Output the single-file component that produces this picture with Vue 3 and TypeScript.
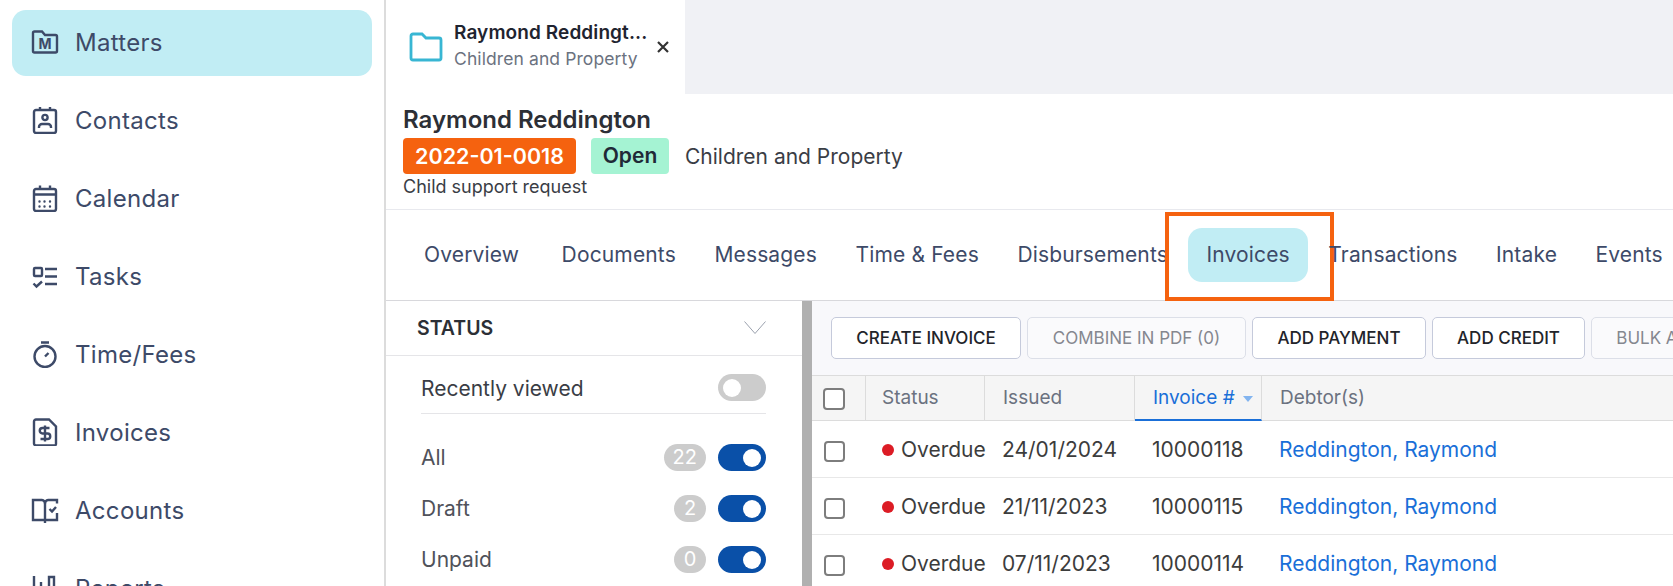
<script setup lang="ts">
const invoices = [
  { issued: '24/01/2024', number: '10000118' },
  { issued: '21/11/2023', number: '10000115' },
  { issued: '07/11/2023', number: '10000114' },
];

const tabs = ['Overview', 'Documents', 'Messages', 'Time & Fees', 'Disbursements', 'Invoices', 'Transactions', 'Intake', 'Events'];

const filters = [
  { label: 'All', count: 22 },
  { label: 'Draft', count: 2 },
  { label: 'Unpaid', count: 0 },
];
</script>

<template>
  <div class="app">
    <aside class="sidebar">
      <a class="nav-item active">
        <svg class="nav-icon" viewBox="0 0 28 28">
          <path d="M2 5a1.500 1.500 0 0 1 1.500-1.500H11L14 7h10.500A1.500 1.500 0 0 1 26 8.500V23a1.500 1.500 0 0 1-1.500 1.500h-21A1.500 1.500 0 0 1 2 23z" />
          <text x="14" y="20.500" class="icon-letter">M</text>
        </svg>
        Matters
      </a>
      <a class="nav-item">
        <svg class="nav-icon" viewBox="0 0 28 28">
          <rect x="3" y="4" width="22" height="23" rx="2" />
          <path d="M9 1v3M19 1v3M8 22v-1a3 3 0 0 1 3-3h6a3 3 0 0 1 3 3v1" />
          <circle cx="14" cy="11.500" r="2.600" />
        </svg>
        Contacts
      </a>
      <a class="nav-item">
        <svg class="nav-icon" viewBox="0 0 28 28">
          <rect x="3" y="5" width="22" height="22" rx="2" />
          <path d="M9 1.500V5M19 1.500V5M3 10.500h22" />
          <path class="dots" d="M8.500 17.500h.01M13.500 17.500h.01M19 17.500h.01M8.500 22.500h.01M13.500 22.500h.01M19 22.500h.01" />
        </svg>
        Calendar
      </a>
      <a class="nav-item">
        <svg class="nav-icon" viewBox="0 0 28 28">
          <rect x="3" y="6" width="8" height="8" rx="1" />
          <path d="M14 7h12M14 14.500h12M14 22h12M2.500 21.500l3 3 5.500-5" />
        </svg>
        Tasks
      </a>
      <a class="nav-item">
        <svg class="nav-icon" viewBox="0 0 28 28">
          <circle cx="14" cy="16.500" r="10.500" />
          <path d="M10 2.500h8M14 16.500l3.500-3.500" />
        </svg>
        Time/Fees
      </a>
      <a class="nav-item">
        <svg class="nav-icon" viewBox="0 0 28 28">
          <path d="M5 1.500h13l7 7V26a1.500 1.500 0 0 1-1.500 1.500H5A2 2 0 0 1 3 25.500v-22a2 2 0 0 1 2-2z" />
          <path d="M18.500 10h-7a2.500 2.500 0 0 0 0 5.500h5a2.500 2.500 0 0 1 0 5.500h-7M14 7.500v16" />
        </svg>
        Invoices
      </a>
      <a class="nav-item">
        <svg class="nav-icon" viewBox="0 0 28 28">
          <path d="M14 8c0-2-1-4-3-4H2v20h12M14 8c0-2 1-4 3-4h9v3.500M26 17v7H14M14 8v19M18.500 13l2.500 2.500 4-4.500" />
        </svg>
        Accounts
      </a>
      <a class="nav-item">
        <svg class="nav-icon" viewBox="0 0 28 28">
          <path d="M3 2v26M10 8v20M18 3h5v25h-5z" />
        </svg>
        Reports
      </a>
    </aside>

    <main class="main">
      <div class="tab-strip">
        <div class="matter-tab">
          <svg class="folder" viewBox="0 0 34 30">
            <path d="M2 4a2 2 0 0 1 2-2h9l4 4h13a2 2 0 0 1 2 2v18a2 2 0 0 1-2 2H4a2 2 0 0 1-2-2z" />
          </svg>
          <div class="matter-tab-text">
            <div class="matter-tab-title">Raymond Reddingt...</div>
            <div class="matter-tab-sub">Children and Property</div>
          </div>
          <svg class="close" viewBox="0 0 14 14">
            <path d="M2 2l10 10M12 2L2 12" />
          </svg>
        </div>
      </div>

      <header class="matter-header">
        <h1>Raymond Reddington</h1>
        <div class="matter-meta">
          <span class="matter-number">2022-01-0018</span>
          <span class="matter-status">Open</span>
          <span class="matter-type">Children and Property</span>
        </div>
        <div class="matter-desc">Child support request</div>
      </header>

      <nav class="tabs">
        <a v-for="tab in tabs" :key="tab" class="tab" :class="{ current: tab === 'Invoices' }">{{ tab }}</a>
      </nav>

      <div class="content">
        <section class="filters">
          <div class="filters-head">
            <span>STATUS</span>
            <svg class="chevron" viewBox="0 0 22 13">
              <path d="M.5.500L11 12.500 21.500.500" />
            </svg>
          </div>
          <div class="filters-body">
            <div class="recent">
              <span>Recently viewed</span>
              <span class="toggle off"></span>
            </div>
            <div v-for="f in filters" :key="f.label" class="filter-row">
              <span class="filter-label">{{ f.label }}</span>
              <span class="count">{{ f.count }}</span>
              <span class="toggle"></span>
            </div>
          </div>
        </section>

        <div class="scrollbar"></div>

        <section class="invoices">
          <div class="toolbar">
            <button class="btn btn-first">CREATE INVOICE</button>
            <button class="btn off btn-combine">COMBINE IN PDF (0)</button>
            <button class="btn btn-payment">ADD PAYMENT</button>
            <button class="btn btn-credit">ADD CREDIT</button>
            <button class="btn off btn-bulk">BULK ACTIONS</button>
          </div>
          <div class="row head">
            <div class="cell"><span class="check big"></span></div>
            <div class="cell">Status</div>
            <div class="cell">Issued</div>
            <div class="cell sorted">Invoice #<span class="caret"></span></div>
            <div class="cell">Debtor(s)</div>
          </div>
          <div v-for="inv in invoices" :key="inv.number" class="row">
            <div class="cell"><span class="check"></span></div>
            <div class="cell"><span class="dot"></span>Overdue</div>
            <div class="cell">{{ inv.issued }}</div>
            <div class="cell">{{ inv.number }}</div>
            <div class="cell debtor">Reddington, Raymond</div>
          </div>
        </section>
      </div>
    </main>
  </div>
</template>

<style>
html,
body {
  margin: 0;
  overflow: hidden;
  background: #fff;
}
</style>

<style scoped>
.app {
  display: flex;
  width: 1673px;
  height: 586px;
  overflow: hidden;
  font-family: Inter, "Noto Sans", sans-serif;
  color: #333;
}

.sidebar {
  flex: none;
  width: 384px;
  height: 586px;
  overflow: hidden;
  box-sizing: content-box;
  border-right: 2px solid #dcdcdc;
  padding-top: 10px;
  display: flex;
  flex-direction: column;
  gap: 12px;
}

.nav-item {
  flex: none;
  display: flex;
  align-items: center;
  gap: 16px;
  width: 360px;
  height: 66px;
  margin-left: 12px;
  padding: 0 0 2px 19px;
  box-sizing: border-box;
  border-radius: 14px;
  font-size: 24px;
  letter-spacing: 0.3px;
  color: #3d4a68;
}

.nav-item.active {
  background: #c1edf4;
}

.nav-icon {
  flex: none;
  width: 28px;
  height: 28px;
  fill: none;
  stroke: #3d4a68;
  stroke-width: 2.400;
}

.nav-icon .dots {
  stroke-width: 2.400;
  stroke-linecap: round;
}

.icon-letter {
  fill: #3d4a68;
  stroke: none;
  font-size: 14px;
  font-weight: 700;
  letter-spacing: 0;
  text-anchor: middle;
}

.main {
  flex: 1;
  min-width: 0;
  display: flex;
  flex-direction: column;
}

.tab-strip {
  height: 94px;
  background: #f0f1f5;
  flex: none;
}

.matter-tab {
  width: 299px;
  height: 94px;
  background: #fff;
  display: flex;
  align-items: center;
  padding-left: 23px;
  box-sizing: border-box;
}

.folder {
  flex: none;
  width: 34px;
  height: 30px;
  fill: none;
  stroke: #38b6d3;
  stroke-width: 2.800;
  margin-right: 11px;
}

.matter-tab-text {
  width: 202px;
  flex: none;
  margin-top: -2px;
}

.matter-tab-title {
  font-size: 19px;
  font-weight: 600;
  letter-spacing: 0.1px;
  color: #1f2430;
  line-height: 26px;
  white-space: nowrap;
}

.matter-tab-sub {
  font-size: 17.500px;
  letter-spacing: 0.1px;
  color: #6b7280;
  line-height: 26px;
  white-space: nowrap;
}

.close {
  width: 14px;
  height: 14px;
  fill: none;
  stroke: #333;
  stroke-width: 2.200;
}

.matter-header {
  flex: none;
  height: 116px;
  box-sizing: border-box;
  padding: 12px 0 0 17px;
  border-bottom: 1px solid #e8e9ee;
}

.matter-header h1 {
  margin: 0;
  font-size: 24px;
  font-weight: 600;
  line-height: 28px;
  color: #2c2f36;
}

.matter-meta {
  display: flex;
  align-items: center;
  margin-top: 4px;
}

.matter-number {
  width: 173px;
  height: 36px;
  line-height: 36px;
  text-align: center;
  background: #f5620f;
  color: #fff;
  font-size: 21.500px;
  font-weight: 600;
  border-radius: 4px;
}

.matter-status {
  width: 78px;
  height: 36px;
  line-height: 36px;
  text-align: center;
  margin-left: 15px;
  background: #a5f3d3;
  color: #1f2937;
  font-size: 21px;
  font-weight: 600;
  border-radius: 4px;
}

.matter-type {
  margin-left: 16px;
  font-size: 21px;
  color: #3a3d45;
}

.matter-desc {
  font-size: 18px;
  line-height: 26px;
  color: #3a3d45;
}

.tabs {
  flex: none;
  height: 91px;
  box-sizing: border-box;
  display: flex;
  align-items: center;
  gap: 2.500px;
  padding: 0 0 1px 20px;
  border-bottom: 1px solid #d8d8dc;
}

.tab {
  position: relative;
  height: 54px;
  line-height: 54px;
  padding: 0 18px;
  border-radius: 14px;
  font-size: 21px;
  letter-spacing: 0.15px;
  color: #3d4a68;
  white-space: nowrap;
}

.tab:nth-child(2) {
  margin-left: 4px;
}

.tab.current {
  background: #c1edf4;
}

.tab.current::after {
  content: "";
  position: absolute;
  left: -23px;
  right: -26px;
  top: -16px;
  bottom: -19px;
  border: 4px solid #f5620f;
}

.content {
  flex: 1;
  min-height: 0;
  display: flex;
}

.filters {
  flex: none;
  width: 416px;
}

.filters-head {
  height: 55px;
  box-sizing: border-box;
  display: flex;
  align-items: center;
  justify-content: space-between;
  padding: 0 36px 1px 31px;
  border-bottom: 1px solid #e5e5e8;
  font-size: 19.500px;
  font-weight: 600;
  color: #2c2f36;
}

.chevron {
  width: 22px;
  height: 13px;
  fill: none;
  stroke: #9aa0ad;
  stroke-width: 1;
}

.filters-body {
  padding: 0 36px 0 35px;
  font-size: 21px;
  color: #50525a;
}

.recent {
  height: 58px;
  box-sizing: border-box;
  display: flex;
  align-items: flex-start;
  justify-content: space-between;
  padding-top: 18px;
  line-height: 29px;
  border-bottom: 1px solid #e5e5e8;
  margin-bottom: 30px;
  color: #3a3d45;
}

.filter-row {
  height: 27px;
  display: flex;
  align-items: center;
  margin-bottom: 24px;
}

.filter-label {
  flex: 1;
}

.count {
  min-width: 32px;
  height: 27px;
  line-height: 27px;
  padding: 0 9px;
  box-sizing: border-box;
  text-align: center;
  border-radius: 14px;
  background: #ccc;
  color: #fff;
  font-size: 20px;
  margin-right: 12px;
}

.toggle {
  position: relative;
  flex: none;
  width: 48px;
  height: 27px;
  border-radius: 14px;
  background: #0a50a8;
}

.toggle::after {
  content: "";
  position: absolute;
  top: 4.500px;
  right: 5px;
  width: 18px;
  height: 18px;
  border-radius: 50%;
  background: #fff;
}

.toggle.off {
  background: #ccc;
}

.toggle.off::after {
  right: auto;
  left: 5px;
}

.scrollbar {
  flex: none;
  width: 10px;
  box-sizing: border-box;
  background: #b0b0b0;
}

.invoices {
  flex: 1;
  min-width: 0;
  overflow: hidden;
}

.toolbar {
  height: 75px;
  box-sizing: border-box;
  display: flex;
  align-items: flex-start;
  gap: 6px;
  padding: 16px 0 0 19px;
  background: #f8f8fb;
  border-bottom: 1px solid #dcdcdc;
  overflow: hidden;
}

.btn {
  flex: none;
  height: 42px;
  padding: 0;
  border: 1px solid #c5cadb;
  border-radius: 5px;
  background: #fff;
  font-family: inherit;
  font-size: 17px;
  font-weight: 500;
  color: #22242a;
}

.btn.off {
  background: #fafafc;
  border-color: #dcdfe8;
  color: #85878f;
  font-weight: 400;
}

.btn-first {
  width: 190px;
}

.btn-combine {
  width: 219px;
}

.btn-payment {
  width: 174px;
}

.btn-credit {
  width: 153px;
}

.btn-bulk {
  width: 176px;
}

.row {
  display: grid;
  grid-template-columns: 54px 119px 150px 127px 1fr;
  height: 57px;
  box-sizing: border-box;
  border-bottom: 1px solid #e8e8e8;
  font-size: 21px;
  color: #3c3c3c;
}

.cell {
  display: flex;
  align-items: center;
  padding-left: 17px;
  box-sizing: border-box;
  white-space: nowrap;
}

.row .cell:first-child {
  padding-left: 12px;
}

.row .cell:nth-child(2) {
  padding-left: 16px;
}

.row.head {
  height: 45px;
  background: #f5f5f5;
  border-bottom-color: #dcdcdc;
  font-size: 19px;
  color: #6b7280;
}

.row.head .cell {
  padding-bottom: 1px;
  padding-left: 18px;
  border-right: 1px solid #dcdcdc;
}

.row.head .cell:first-child {
  padding-left: 11px;
}

.row.head .cell:nth-child(2) {
  padding-left: 16px;
}

.row.head .cell:last-child {
  border-right: none;
}

.row.head .cell.sorted {
  color: #1a6fd8;
  border-bottom: 2px solid #1a6fd8;
  margin-bottom: -1px;
}

.caret {
  width: 0;
  height: 0;
  margin-left: 8px;
  margin-top: 3px;
  border-left: 5px solid transparent;
  border-right: 5px solid transparent;
  border-top: 6px solid #82b4ef;
}

.check {
  width: 21px;
  height: 21px;
  margin-top: 4px;
  box-sizing: border-box;
  border: 2px solid #7d7d7d;
  border-radius: 4px;
  background: #fff;
}

.check.big {
  width: 22px;
  height: 22px;
  margin-top: 2px;
}

.dot {
  flex: none;
  width: 12px;
  height: 12px;
  margin-right: 7px;
  margin-top: 2px;
  border-radius: 50%;
  background: #dc1c25;
}

.debtor {
  color: #1a6fd8;
}
</style>
